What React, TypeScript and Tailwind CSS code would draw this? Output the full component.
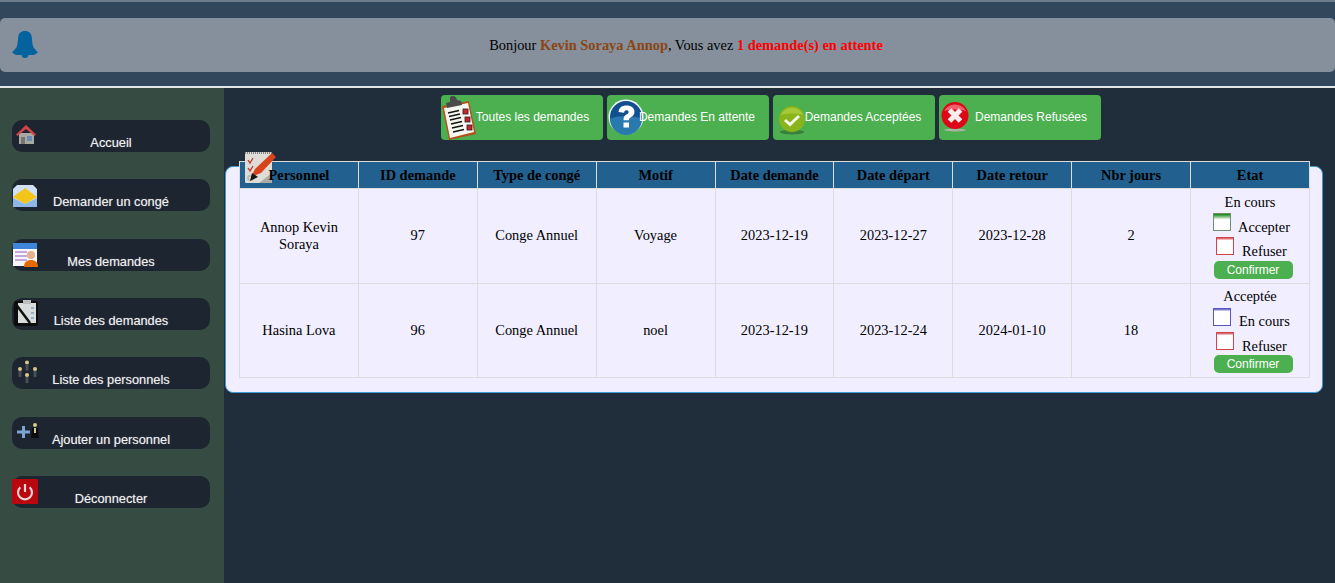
import React from 'react';

const BellIcon = () => (
  <svg width="28" height="30" viewBox="0 0 28 30">
    <path d="M14 2c-4 0-6.500 2.600-6.800 6-.4 5-.6 7.500-1.700 10.500L1 23.500 5 26h18l4-2.500-4.500-5C21.400 15.500 21.200 13 20.800 8 20.500 4.600 18 2 14 2z" fill="#04629f" />
    <path d="M10.500 25.500h7C17.500 28 16 29 14 29s-3.500-1-3.500-3.500z" fill="#04629f" />
  </svg>
);

const HomeIcon = () => (
  <svg width="22" height="22" viewBox="0 0 22 22">
    <rect x="4" y="9" width="15" height="11" fill="#a9a9a4" />
    <rect x="6" y="13" width="4" height="7" fill="#77746c" />
    <rect x="12" y="12" width="5" height="5" fill="#6c89b5" />
    <path d="M11 1 1 10.500l1.500 1.500L11 5l8.500 7 1.500-1.500z" fill="#d2444a" />
  </svg>
);

const MailIcon = () => (
  <svg width="26" height="26" viewBox="0 0 26 26">
    <path d="M5 1h16l4 4v18H1V5z" fill="#cfe0f5" />
    <path d="M1 13 13 4l12 9-12 7z" fill="#f3c41a" />
    <path d="M1 14l12 6 12-6v9H1z" fill="#8eb6e6" />
  </svg>
);

const ProfileListIcon = () => (
  <svg width="27" height="26" viewBox="0 0 27 26">
    <rect x="1" y="1" width="24" height="23" fill="#f6f6fb" />
    <rect x="1" y="1" width="24" height="6" fill="#3f85d9" />
    <path d="M3 10h12M3 14h12M3 18h12" stroke="#b98ad0" strokeWidth="1.500" />
    <circle cx="19" cy="13" r="4" fill="#e5b08e" />
    <path d="M12 25c0-5 3-7 7-7s7 2 7 7z" fill="#e66a00" />
  </svg>
);

const ClipboardPenIcon = () => (
  <svg width="26" height="28" viewBox="0 0 26 28">
    <rect x="1" y="2" width="24" height="25" rx="2" fill="#0d0d0d" />
    <path d="M5 4h18v20H5z" fill="#d8dcdc" />
    <rect x="10" y="1" width="8" height="4" fill="#b9bdbd" />
    <path d="M18 9h3M18 14h3M18 19h3" stroke="#7da3c4" strokeWidth="1.500" />
    <path d="M2 4l15 20" stroke="#111" strokeWidth="2.500" />
  </svg>
);

const PeopleIcon = () => (
  <svg width="26" height="24" viewBox="0 0 26 24">
    <g fill="#d8c98a">
      <circle cx="10" cy="2.500" r="2" />
      <circle cx="3" cy="9" r="2" />
      <circle cx="18" cy="9" r="2" />
      <circle cx="10" cy="15" r="2" />
    </g>
    <g fill="#4b4f55">
      <rect x="8.500" y="4.500" width="3" height="6" />
      <rect x="1.500" y="11" width="3" height="6" />
      <rect x="16.500" y="11" width="3" height="6" />
      <rect x="8.500" y="17" width="3" height="6" />
    </g>
  </svg>
);

const AddPersonIcon = () => (
  <svg width="26" height="18" viewBox="0 0 26 18">
    <path d="M6 4h3v4.500h5v3H9V16H6v-4.500H1v-3h5z" fill="#7ba6d4" />
    <circle cx="19" cy="3" r="2" fill="#d8c98a" />
    <path d="M16 6h6l1 10h-8z" fill="#0c0d0f" />
    <rect x="18" y="6" width="2" height="5" fill="#d8c98a" />
  </svg>
);

const PowerIcon = () => (
  <svg width="26" height="25" viewBox="0 0 26 25">
    <rect width="26" height="25" rx="1" fill="#b8070f" />
    <path d="M8.300 8.200a7 7 0 1 0 9.400 0" fill="none" stroke="#ead5d5" strokeWidth="2.200" />
    <path d="M13 5v8" stroke="#ead5d5" strokeWidth="2.200" />
  </svg>
);

const ChecklistBoardIcon = () => (
  <svg width="36" height="46" viewBox="0 0 36 46">
    <path d="M1 11 28 6l7 33-27 6z" fill="#b4521c" />
    <path d="M3 13 27 8l6 29-24 6z" fill="#f7f7f2" />
    <path d="M9 2c3-2 6-1 7 3l4 1 1 4-15 3-1-5 4-1z" fill="#4b4b4b" />
    <path d="M7 18l11-2.500M8 21.500l11-2.500M9 25l11-2.500M10 29l11-2.500M11 33l11-2.500M12 37l11-2.500" stroke="#161616" strokeWidth="1.500" />
    <g fill="#c8262c" stroke="#222" strokeWidth="0.800">
      <rect x="22" y="14" width="5" height="5" />
      <rect x="24" y="22" width="5" height="5" />
      <rect x="26" y="30" width="5" height="5" />
    </g>
  </svg>
);

const QuestionIcon = () => (
  <svg width="36" height="36" viewBox="0 0 36 36">
    <circle cx="18" cy="18" r="17.500" fill="#f1f5f8" />
    <circle cx="18" cy="18" r="16" fill="#114f8f" />
    <path d="M2 20c6-4 26-4 32 0a16 16 0 0 1-32 0z" fill="#2a79ae" />
    <path d="M10.500 13c.5-4.500 3.500-6.500 8-6.500 4.800 0 8 2.500 8 6.300 0 3-1.800 4.300-3.600 5.500-1.400 1-2 1.500-2 3H15.500c0-3 .8-4.300 2.800-5.700 1.500-1 2.300-1.500 2.300-2.700 0-1.100-.9-1.700-2.100-1.700-1.400 0-2.200.8-2.400 2.500z" fill="#fff" />
    <rect x="15.500" y="23.500" width="5.500" height="5" fill="#fff" />
  </svg>
);

const CheckRoundIcon = () => (
  <svg width="28" height="30" viewBox="0 0 28 30">
    <ellipse cx="14" cy="27" rx="12" ry="2.500" fill="#39803d" />
    <circle cx="14" cy="14" r="13" fill="#89b51b" />
    <path d="M3 10a12 12 0 0 1 22 0c-5-2-16-2-22 0z" fill="#a6c93a" />
    <path d="M7 15l5 4.500 9-8.500" fill="none" stroke="#f4f7ea" strokeWidth="3" />
  </svg>
);

const CrossRoundIcon = () => (
  <svg width="28" height="30" viewBox="0 0 28 30">
    <ellipse cx="14" cy="28" rx="11" ry="1.500" fill="#a9b5a4" />
    <circle cx="14" cy="13.500" r="13.500" fill="#de0717" />
    <path d="M3 9a12.500 12.500 0 0 1 22 0c-6-2-16-2-22 0z" fill="#f0616a" />
    <path d="M8.500 8l11 11M19.500 8l-11 11" stroke="#fbeeee" strokeWidth="5" />
  </svg>
);

const MarkerNoteIcon = () => (
  <svg width="32" height="33" viewBox="0 0 32 33">
    <rect x="0" y="1" width="27" height="31" rx="1" fill="#dedcd6" />
    <path d="M0 2h27" stroke="#85857f" strokeWidth="2" strokeDasharray="1 1" />
    <path d="M3 9l2 3 3-5M3 17l2 3 3-5" fill="none" stroke="#c9352b" strokeWidth="1.300" />
    <path d="M3 25h5v4H3z" fill="none" stroke="#a5a5a0" />
    <path d="M6 26l4-8L27 2l4 4-15 16z" fill="#d8431b" />
    <path d="M5 30l2-8 6 4z" fill="#161616" />
    <path d="M14 32l13-10v10z" fill="#adaba5" />
  </svg>
);

const navItems = [
  { label: 'Accueil', icon: <HomeIcon />, iconClass: 'left-[3px] top-[4px]' },
  { label: 'Demander un congé', icon: <MailIcon />, iconClass: 'left-0 top-[5px]' },
  { label: 'Mes demandes', icon: <ProfileListIcon />, iconClass: 'left-0 top-[3px]' },
  { label: 'Liste des demandes', icon: <ClipboardPenIcon />, iconClass: 'left-px top-[1px]' },
  { label: 'Liste des personnels', icon: <PeopleIcon />, iconClass: 'left-[5px] top-[3px]' },
  { label: 'Ajouter un personnel', icon: <AddPersonIcon />, iconClass: 'left-[4px] top-[5px]' },
  { label: 'Déconnecter', icon: <PowerIcon />, iconClass: 'left-0 top-[3px]' },
];

const tabs = [
  { label: 'Toutes les demandes', icon: <ChecklistBoardIcon />, textClass: 'pl-[21px]', iconClass: 'left-0 top-0' },
  { label: 'Demandes En attente', icon: <QuestionIcon />, textClass: 'pl-[18px]', iconClass: 'left-px top-[4px]' },
  { label: 'Demandes Acceptées', icon: <CheckRoundIcon />, textClass: 'pl-[18px]', iconClass: 'left-[5px] top-[10px]' },
  { label: 'Demandes Refusées', icon: <CrossRoundIcon />, textClass: 'pl-[22px]', iconClass: 'left-[2px] top-[7px]' },
];

const headers = ['Personnel', 'ID demande', 'Type de congé', 'Motif', 'Date demande', 'Date départ', 'Date retour', 'Nbr jours', 'Etat'];

const rows = [
  {
    values: ['Annop Kevin Soraya', '97', 'Conge Annuel', 'Voyage', '2023-12-19', '2023-12-27', '2023-12-28', '2'],
    status: 'En cours',
    first: 'Accepter',
    firstBox: 'mb-[6px] border-[#6f8f6f] bg-[linear-gradient(#0a7f0a,#ffffff_35%)]',
    height: 'h-[95px]',
    labelGap: 'ml-[7px]',
    cellPad: 'pb-[2px]',
    secondRowGap: '',
  },
  {
    values: ['Hasina Lova', '96', 'Conge Annuel', 'noel', '2023-12-19', '2023-12-24', '2024-01-10', '18'],
    status: 'Acceptée',
    first: 'En cours',
    firstBox: 'mb-[4px] border-[#5a55c4] bg-[linear-gradient(#5a55c4,#ffffff_15%)]',
    height: 'h-[94px]',
    labelGap: 'ml-2',
    cellPad: 'pb-0',
    secondRowGap: 'mt-px -mb-px',
  },
];

export default function App() {
  return (
    <div className="flex h-[583px] w-[1335px] flex-col overflow-hidden bg-[#202d3b] font-['Liberation_Serif',serif] text-[14.400px] text-black">
      {/* Top banner */}
      <header className="h-[88px] shrink-0 border-t-2 border-b-2 border-t-[#6f7c8b] border-b-[#e4e6e6] bg-[#32465c] pt-4">
        <div className="relative flex h-[54px] items-center justify-center rounded-[5px] bg-[#85909c] pl-[37px] pt-[2px]">
          <span className="absolute left-[11px] top-[11px]"><BellIcon /></span>
          <p>
            Bonjour <b className="text-[#8b4513]">Kevin Soraya Annop</b>, Vous avez <b className="text-[#f00]">1 demande(s) en attente</b>
          </p>
        </div>
      </header>

      <div className="flex min-h-0 flex-1">
        {/* Side menu */}
        <aside className="flex w-[224px] shrink-0 flex-col gap-[27.330px] bg-[#364b41] px-3 pt-8 font-['Liberation_Sans',sans-serif]">
          {navItems.map((item) => (
            <div key={item.label} className="relative flex h-[32px] w-[198px] items-end justify-center rounded-[10px] bg-[#1c2530] pb-[2px] text-[12.800px] leading-[15px] text-[#eeeeee] [text-shadow:0_0_1px_rgba(255,255,255,0.5)]">
              <span className={`absolute ${item.iconClass}`}>{item.icon}</span>
              <span>{item.label}</span>
            </div>
          ))}
        </aside>

        {/* Content */}
        <main className="min-w-0 flex-1 pt-[7px] pl-px pr-3">
          <nav className="ml-[216px] flex gap-1 font-['Liberation_Sans',sans-serif]">
            {tabs.map((tab) => (
              <div key={tab.label} className={`relative flex h-[45px] w-[162px] items-center justify-center rounded-[4px] bg-[#4caf50] pb-[2px] text-[12px] text-white ${tab.textClass}`}>
                <span className={`absolute ${tab.iconClass}`}>{tab.icon}</span>
                <span className="relative whitespace-nowrap">{tab.label}</span>
              </div>
            ))}
          </nav>

          <section className="mt-[26px] h-[227px] w-[1098px] rounded-[8px] border border-[#3d9ad6] bg-[#f0eeff] pl-[13px]">
            <div className="relative -mt-[6px] w-[1071px]">
              <span className="absolute -top-[10px] left-[6px] z-10"><MarkerNoteIcon /></span>
              <table className="w-full table-fixed border-collapse text-center">
                <thead>
                  <tr className="h-[27px] bg-[#22618f]">
                    {headers.map((h) => (
                      <th key={h} className="border border-[#ddd] p-0 pt-[2px] font-bold">
                        <span className="relative z-20">{h}</span>
                      </th>
                    ))}
                  </tr>
                </thead>
                <tbody>
                  {rows.map((row) => (
                    <tr key={row.values[1]} className={row.height}>
                      {row.values.map((v, i) => (
                        <td key={i} className={`border border-[#ddd] px-2 py-0 leading-[17px] ${i === 0 ? 'pb-0' : row.cellPad}`}>{v}</td>
                      ))}
                      <td className="border border-[#ddd] p-0">
                        <div className="flex flex-col items-center leading-4">
                          <span>{row.status}</span>
                          <div className="mt-[3px] ml-[4px] flex h-6 w-[78px] items-center">
                            <span className={`h-[18px] w-[18px] shrink-0 border ${row.firstBox}`} />
                            <span className={`${row.labelGap} mt-[4px] whitespace-nowrap`}>{row.first}</span>
                          </div>
                          <div className={`ml-[4px] flex h-6 w-[78px] items-center pl-[3px] ${row.secondRowGap}`}>
                            <span className="mb-[6px] h-[18px] w-[18px] shrink-0 border border-[#d4434b] bg-[linear-gradient(#d4434b,#ffffff_15%)]" />
                            <span className="ml-2 mt-[4px]">Refuser</span>
                          </div>
                          <div className="ml-[6px] flex h-[18px] w-[79px] items-center justify-center rounded-[5px] bg-[#4caf50] font-['Liberation_Sans',sans-serif] text-[12px] text-white">Confirmer</div>
                        </div>
                      </td>
                    </tr>
                  ))}
                </tbody>
              </table>
            </div>
          </section>
        </main>
      </div>
    </div>
  );
}
